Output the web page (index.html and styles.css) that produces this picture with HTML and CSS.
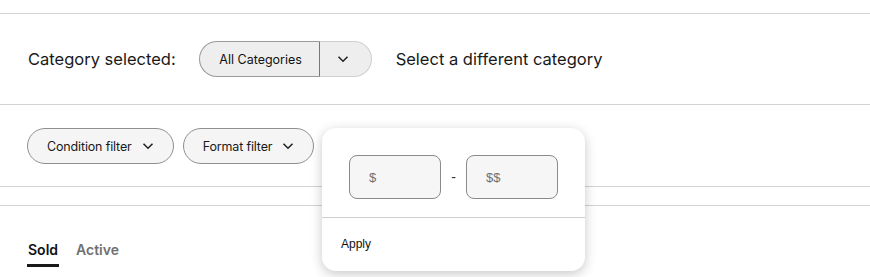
FILE: index.html
```html
<!DOCTYPE html>
<html lang="en">
<head>
    <meta charset="UTF-8">
    <meta name="viewport" content="width=device-width, initial-scale=1.0">
    <title>Sold items search</title>
    <link rel="stylesheet" href="styles.css">
</head>
<body>
    <section class="category-row">
        <span class="label">Category selected:</span>
        <div class="split-button">
            <button class="split-main">All Categories</button>
            <button class="split-toggle" aria-label="Open categories">
                <svg width="12" height="8" viewBox="0 0 12 8"><path d="M1.5 1.8 6 6.2l4.5-4.4" fill="none" stroke="#222" stroke-width="1.6"/></svg>
            </button>
        </div>
        <a class="link" href="#">Select a different category</a>
    </section>

    <section class="filter-row">
        <button class="pill">Condition filter
            <svg width="12" height="8" viewBox="0 0 12 8"><path d="M1.5 1.8 6 6.2l4.5-4.4" fill="none" stroke="#222" stroke-width="1.6"/></svg>
        </button>
        <button class="pill">Format filter
            <svg width="12" height="8" viewBox="0 0 12 8"><path d="M1.5 1.8 6 6.2l4.5-4.4" fill="none" stroke="#222" stroke-width="1.6"/></svg>
        </button>

        <div class="price-popup">
            <div class="price-inputs">
                <input class="price-box" type="text" placeholder="$">
                <span class="dash">-</span>
                <input class="price-box" type="text" placeholder="$$">
            </div>
            <div class="popup-footer">
                <button class="apply">Apply</button>
            </div>
        </div>
    </section>

    <section class="results">
        <nav class="tabs">
            <a class="tab active" href="#">Sold</a>
            <a class="tab" href="#">Active</a>
        </nav>
    </section>
</body>
</html>
```

FILE: styles.css
```css
html, body {
    height: 100%;
}
body {
    margin: 0;
    padding-top: 13px;
    box-sizing: border-box;
    font-family: Inter, "Liberation Sans", Arial, sans-serif;
    color: #191919;
    background: #fff;
}
button {
    font-family: inherit;
    cursor: pointer;
}
.category-row {
    display: flex;
    align-items: center;
    height: 90px;
    padding-left: 28px;
    border-top: 1px solid #d2d2d2;
    border-bottom: 1px solid #d2d2d2;
}
.label {
    font-size: 16.5px;
    margin-right: 23px;
}
.split-button {
    display: flex;
    height: 36px;
    margin-right: 24px;
}
.split-main {
    width: 121px;
    height: 36px;
    background: #eeeeee;
    border: 1px solid #9a9a9a;
    border-right: 1px solid #777;
    border-radius: 18px 0 0 18px;
    font-size: 12.5px;
    color: #111;
    padding: 0 0 0 3px;
}
.split-toggle {
    width: 52px;
    height: 36px;
    background: #eeeeee;
    border: 1px solid #cfcfcf;
    border-left: none;
    border-radius: 0 18px 18px 0;
    display: flex;
    align-items: center;
    justify-content: center;
    padding: 0 4px 0 0;
}
.link {
    font-size: 16.5px;
    color: #191919;
    text-decoration: none;
}
.filter-row {
    position: relative;
    display: flex;
    gap: 9px;
    height: 58px;
    padding: 23px 0 0 27px;
    border-bottom: 1px solid #d2d2d2;
}
.pill {
    display: flex;
    align-items: center;
    gap: 10px;
    height: 36px;
    padding: 0 19px 0 19px;
    background: #f5f5f5;
    border: 1px solid #8f8f8f;
    border-radius: 18px;
    font-size: 12.5px;
    letter-spacing: -0.15px;
    color: #191919;
}
.price-popup {
    position: absolute;
    left: 322px;
    top: 23px;
    width: 263px;
    height: 143px;
    background: #fff;
    border-radius: 14px;
    box-shadow: 0 3px 12px rgba(0, 0, 0, 0.22);
    z-index: 2;
}
.price-inputs {
    display: flex;
    align-items: center;
    padding: 27px 27px 18px 27px;
    border-bottom: 1px solid #cfcfcf;
}
.price-box {
    box-sizing: border-box;
    width: 92px;
    height: 44px;
    padding: 0 0 0 19px;
    background: #f6f6f6;
    border: 1px solid #8a8a8a;
    border-radius: 8px;
    font-family: "Liberation Sans", Arial, sans-serif;
    font-size: 13px;
}
.price-box::placeholder {
    color: #707070;
}
.dash {
    flex: 1;
    text-align: center;
    font-family: "Liberation Sans", Arial, sans-serif;
    font-size: 14px;
    color: #333;
}
.popup-footer {
    padding: 14px 19px;
}
.apply {
    background: none;
    border: none;
    padding: 0;
    font-family: "Liberation Sans", Arial, sans-serif;
    font-size: 12px;
    color: #111;
}
.results {
    margin-top: 18px;
    border-top: 1px solid #d2d2d2;
    padding: 35px 0 0 27px;
}
.tabs {
    display: flex;
    gap: 16px;
}
.tab {
    font-size: 14px;
    font-weight: 600;
    color: #707070;
    text-decoration: none;
    padding: 0 1px 6px 1px;
    border-bottom: 3px solid transparent;
}
.tab.active {
    color: #111;
    border-bottom-color: #191919;
}
```
